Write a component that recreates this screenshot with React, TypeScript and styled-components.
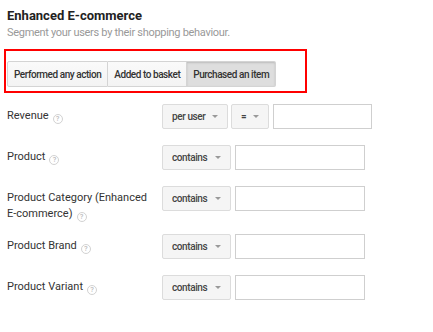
import * as React from 'react';
import styled, { createGlobalStyle } from 'styled-components';

const GlobalStyle = createGlobalStyle`
  body {
    margin: 0;
    background: #fff;
    font-family: Roboto, "Liberation Sans", Arial, sans-serif;
    color: #333;
  }
`;

const Page = styled.div`
  padding: 7px 0 0 7px;
`;

const Title = styled.h2`
  margin: 0;
  font-size: 13px;
  line-height: 17px;
  font-weight: 700;
  color: #222;
`;

const Subtitle = styled.p`
  margin: 1px 0 0;
  font-size: 11px;
  letter-spacing: -0.3px;
  line-height: 16px;
  color: #999;
`;

const Highlight = styled.div`
  width: 298px;
  margin: 8px 0 0 -3px;
  padding: 10px 0 4px 1px;
  border: 2px solid #f00;
`;

const Segmented = styled.div`
  display: flex;
`;

const SegButton = styled.button<{ $active?: boolean }>`
  height: 26px;
  padding: 0 6px;
  white-space: nowrap;
  font-family: Roboto, "Liberation Sans", Arial, sans-serif;
  font-size: 10px;
  letter-spacing: -0.45px;
  font-weight: 500;
  color: #333;
  border: 1px solid #d4d4d4;
  border-left-width: 0;
  background: ${p => (p.$active ? '#dedede' : 'linear-gradient(#fafafa, #f3f3f3)')};
  box-shadow: ${p => (p.$active ? 'inset 0 1px 2px rgba(0,0,0,0.15)' : 'none')};

  &:first-child {
    border-left-width: 1px;
    border-radius: 2px 0 0 2px;
  }
  &:last-child {
    border-radius: 0 2px 2px 0;
  }
`;

const Form = styled.div`
  margin-top: 11px;
  display: flex;
  flex-direction: column;
  gap: 16px;
`;

const Row = styled.div`
  display: flex;
  align-items: flex-start;
`;

const Label = styled.div`
  width: 148px;
  padding: 4px 7px 0 0;
  margin-bottom: -4px;
  font-size: 11px;
  line-height: 16px;
  color: #333;
`;

const Help = styled.span`
  box-sizing: border-box;
  display: inline-block;
  width: 10px;
  height: 10px;
  margin-left: 4px;
  border: 1px solid #d2d2d2;
  border-radius: 50%;
  font-size: 7.5px;
  font-weight: 500;
  line-height: 8px;
  text-align: center;
  color: #bbb;
  vertical-align: -2px;
`;

const Controls = styled.div`
  display: flex;
  gap: 3px;
`;

const Select = styled.div<{ $width: number }>`
  box-sizing: border-box;
  width: ${p => p.$width}px;
  height: 25px;
  padding: 0 0 0 9px;
  display: flex;
  align-items: center;
  justify-content: space-between;
  background: #f5f5f5;
  border: 1px solid #dcdcdc;
  border-radius: 2px;
  font-size: 10px;
  letter-spacing: -0.4px;
  font-weight: 500;
  color: #444;
`;

const Arrow = styled.span`
  width: 0;
  height: 0;
  margin-right: 9px;
  border-left: 3px solid transparent;
  border-right: 3px solid transparent;
  border-top: 3px solid #999;
`;

const Input = styled.input<{ $width: number }>`
  box-sizing: border-box;
  width: ${p => p.$width}px;
  height: 25px;
  margin-left: 1px;
  border: 1px solid #cfcfcf;
  background: #fff;
  outline: none;
`;

const Dropdown: React.FC<{ value: string; width: number }> = ({ value, width }) => (
  <Select $width={width}>
    <span>{value}</span>
    <Arrow />
  </Select>
);

const Field: React.FC<{ label: React.ReactNode; children: React.ReactNode }> = ({ label, children }) => (
  <Row>
    <Label>
      {label}
      <Help>?</Help>
    </Label>
    <Controls>{children}</Controls>
  </Row>
);

const NoWrap = styled.span`
  white-space: nowrap;
`;

const textFields: React.ReactNode[] = [
  'Product',
  <>
    Product Category (Enhanced <NoWrap>E-commerce)</NoWrap>
  </>,
  'Product Brand',
  'Product Variant',
];

export default function App() {
  return (
    <Page>
      <GlobalStyle />
      <Title>Enhanced E-commerce</Title>
      <Subtitle>Segment your users by their shopping behaviour.</Subtitle>
      <Highlight>
        <Segmented>
          <SegButton>Performed any action</SegButton>
          <SegButton>Added to basket</SegButton>
          <SegButton $active>Purchased an item</SegButton>
        </Segmented>
      </Highlight>
      <Form>
        <Field label="Revenue">
          <Dropdown value="per user" width={66} />
          <Dropdown value="=" width={38} />
          <Input $width={99} />
        </Field>
        {textFields.map((f, i) => (
          <Field key={i} label={f}>
            <Dropdown value="contains" width={69} />
            <Input $width={130} />
          </Field>
        ))}
      </Form>
    </Page>
  );
}
